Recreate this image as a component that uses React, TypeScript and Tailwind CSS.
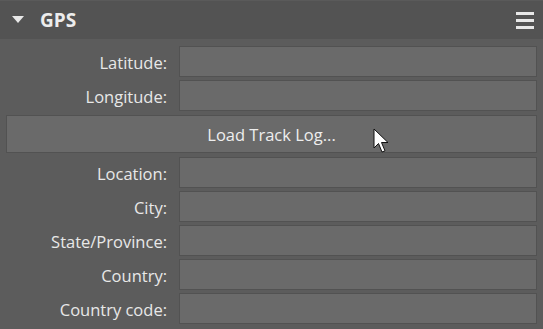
import React from "react";

const rowsA = ["Latitude:", "Longitude:"];
const rowsB = ["Location:", "City:", "State/Province:", "Country:", "Country code:"];

function Row({ label }: { label: string }) {
  return (
    <div className="flex items-center h-[30px]">
      <div className="w-[161px] text-right text-[16.5px] leading-none text-[#e8e8e8] pt-[4px]">{label}</div>
      <div className="ml-[12px] flex-1 h-[31px] bg-[#6a6a6a] border border-[#525252]" />
    </div>
  );
}

export default function App() {
  return (
    <div
      className="w-[543px] h-[329px] bg-[#5c5c5c] overflow-hidden relative"
      style={{ fontFamily: '"Open Sans", "Noto Sans", sans-serif' }}
    >
      <div className="h-[39px] bg-[#535353] border-t border-[#5a5a5a] flex items-center pl-[12px] pr-[9px]">
        <svg width="12" height="8" viewBox="0 0 12 8" className="mr-[16px]">
          <polygon points="0,0 12,0 6,7" fill="#e8e8e8" />
        </svg>
        <span className="text-[19px] font-bold text-[#ececec] leading-none pt-[1px]">GPS</span>
        <div className="flex-1" />
        <svg width="18" height="17" viewBox="0 0 18 17">
          <rect x="0" y="0" width="18" height="3" fill="#e8e8e8" />
          <rect x="0" y="7" width="18" height="3" fill="#e8e8e8" />
          <rect x="0" y="14" width="18" height="3" fill="#e8e8e8" />
        </svg>
      </div>
      <div className="flex flex-col gap-[4px] px-[6px] pt-[7px]">
        {rowsA.map((l) => (
          <Row key={l} label={l} />
        ))}
        <div className="h-[38px] mt-[1px] pt-[3px] bg-[#6a6a6a] border border-[#525252] flex items-center justify-center text-[16.5px] leading-none text-[#eeeeee]">
          Load Track Log...
        </div>
        {rowsB.map((l) => (
          <Row key={l} label={l} />
        ))}
      </div>
      <svg
        className="absolute left-[373px] top-[128px]"
        width="19"
        height="28"
        viewBox="0 0 19 28"
      >
        <path
          d="M1 1 L1 20 L5.5 15.5 L9 24 L12 22.8 L8.5 14.5 L15 14.5 Z"
          fill="#ffffff"
          stroke="#111111"
          strokeWidth="1"
          strokeLinejoin="miter"
        />
      </svg>
    </div>
  );
}
